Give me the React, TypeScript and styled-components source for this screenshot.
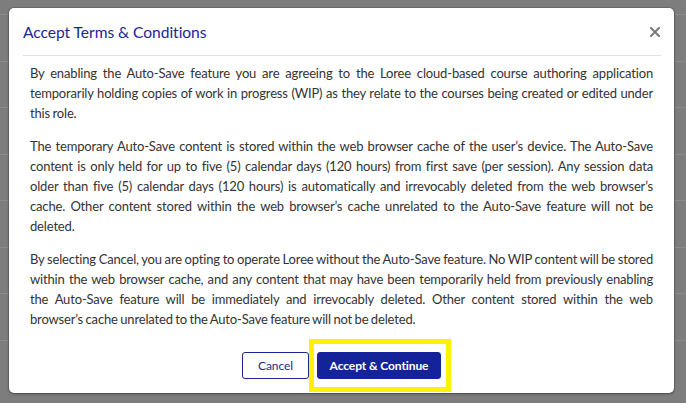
import React from "react";
import styled, { createGlobalStyle } from "styled-components";

const GlobalStyle = createGlobalStyle`
  html, body { margin: 0; padding: 0; }
  body {
    font-family: "Lato", "Noto Sans", sans-serif;
    background: #7f7f7f;
  }
  * { box-sizing: border-box; }
`;

const Backdrop = styled.div`
  width: 686px;
  height: 403px;
  overflow: hidden;
  background-color: #7f7f7f;
  background-image: repeating-linear-gradient(
    to bottom,
    #7d7d7d 0px,
    #7d7d7d 45.5px,
    #8c8c8c 45.5px,
    #8c8c8c 46.5px
  );
  background-position: 0 -31px;
  padding: 8px 12px 10px 9px;
  display: flex;
  align-items: flex-start;
`;

const Modal = styled.div`
  width: 665px;
  height: 385px;
  background: #ffffff;
  border-radius: 5px;
  box-shadow: 0 1px 3px rgba(0, 0, 0, 0.35), 0 0 0 1px rgba(0, 0, 0, 0.12);
  display: flex;
  flex-direction: column;
`;

const Header = styled.div`
  margin: 0 13px 0 14px;
  height: 48px;
  border-bottom: 1px solid #e2e2e2;
  display: flex;
  align-items: center;
  justify-content: space-between;
  padding-top: 1px;
`;

const Title = styled.h2`
  margin: 0;
  font-family: "Lato", sans-serif;
  font-weight: 400;
  font-size: 15.6px;
  color: #1c2693;
  letter-spacing: -0.05px;
`;

const CloseButton = styled.button`
  border: 0;
  background: transparent;
  padding: 0;
  margin-right: 1px;
  width: 10px;
  height: 10px;
  display: flex;
  align-items: center;
  justify-content: center;
  cursor: pointer;
`;

const Body = styled.div`
  padding: 7px 21px 0 21px;
  flex: 1;
`;

const Paragraph = styled.p`
  margin: 0 0 13px 0;
  font-size: 13px;
  line-height: 20px;
  letter-spacing: -0.16px;
  word-spacing: -0.7px;
  color: #333333;
  &:last-child { margin-bottom: 0; }
`;

const Line = styled.span<{ $last?: boolean }>`
  display: block;
  white-space: nowrap;
  text-align: ${(p) => (p.$last ? "left" : "justify")};
  text-align-last: ${(p) => (p.$last ? "left" : "justify")};
`;

const Footer = styled.div`
  display: flex;
  justify-content: center;
  gap: 8px;
  padding-bottom: 14px;
`;

const BaseButton = styled.button`
  height: 27px;
  border-radius: 3px;
  font-family: "Lato", sans-serif;
  font-size: 12px;
  letter-spacing: -0.1px;
  cursor: pointer;
  display: flex;
  align-items: center;
  justify-content: center;
  padding: 0;
`;

const OutlineButton = styled(BaseButton)`
  width: 67px;
  background: #ffffff;
  color: #1c2693;
  border: 1px solid #1c2693;
`;

const Highlight = styled.div`
  position: relative;
  &::after {
    content: "";
    position: absolute;
    top: -13px;
    left: -8px;
    right: -10px;
    bottom: -13px;
    border: 5px solid #fff200;
    pointer-events: none;
  }
`;

const PrimaryButton = styled(BaseButton)`
  width: 124px;
  background: #142399;
  color: #ffffff;
  border: 1px solid #142399;
  font-weight: 700;
`;

const paragraphs: string[][] = [
  [
    "By enabling the Auto-Save feature you are agreeing to the Loree cloud-based course authoring application",
    "temporarily holding copies of work in progress (WIP) as they relate to the courses being created or edited under",
    "this role.",
  ],
  [
    "The temporary Auto-Save content is stored within the web browser cache of the user’s device. The Auto-Save",
    "content is only held for up to five (5) calendar days (120 hours) from first save (per session). Any session data",
    "older than five (5) calendar days (120 hours) is automatically and irrevocably deleted from the web browser’s",
    "cache. Other content stored within the web browser’s cache unrelated to the Auto-Save feature will not be",
    "deleted.",
  ],
  [
    "By selecting Cancel, you are opting to operate Loree without the Auto-Save feature. No WIP content will be stored",
    "within the web browser cache, and any content that may have been temporarily held from previously enabling",
    "the Auto-Save feature will be immediately and irrevocably deleted. Other content stored within the web",
    "browser’s cache unrelated to the Auto-Save feature will not be deleted.",
  ],
];

export default function App() {
  return (
    <>
      <GlobalStyle />
      <Backdrop>
        <Modal role="dialog" aria-labelledby="terms-title">
          <Header>
            <Title id="terms-title">Accept Terms &amp; Conditions</Title>
            <CloseButton aria-label="Close">
              <svg width="10" height="10" viewBox="0 0 10 10">
                <path d="M1 1 L9 9 M9 1 L1 9" stroke="#7a7a7a" strokeWidth="2" strokeLinecap="square" fill="none" />
              </svg>
            </CloseButton>
          </Header>
          <Body>
            {paragraphs.map((lines, i) => (
              <Paragraph key={i}>
                {lines.map((line, j) => (
                  <Line key={j} $last={j === lines.length - 1}>
                    {line}
                  </Line>
                ))}
              </Paragraph>
            ))}
          </Body>
          <Footer>
            <OutlineButton>Cancel</OutlineButton>
            <Highlight>
              <PrimaryButton>Accept &amp; Continue</PrimaryButton>
            </Highlight>
          </Footer>
        </Modal>
      </Backdrop>
    </>
  );
}
